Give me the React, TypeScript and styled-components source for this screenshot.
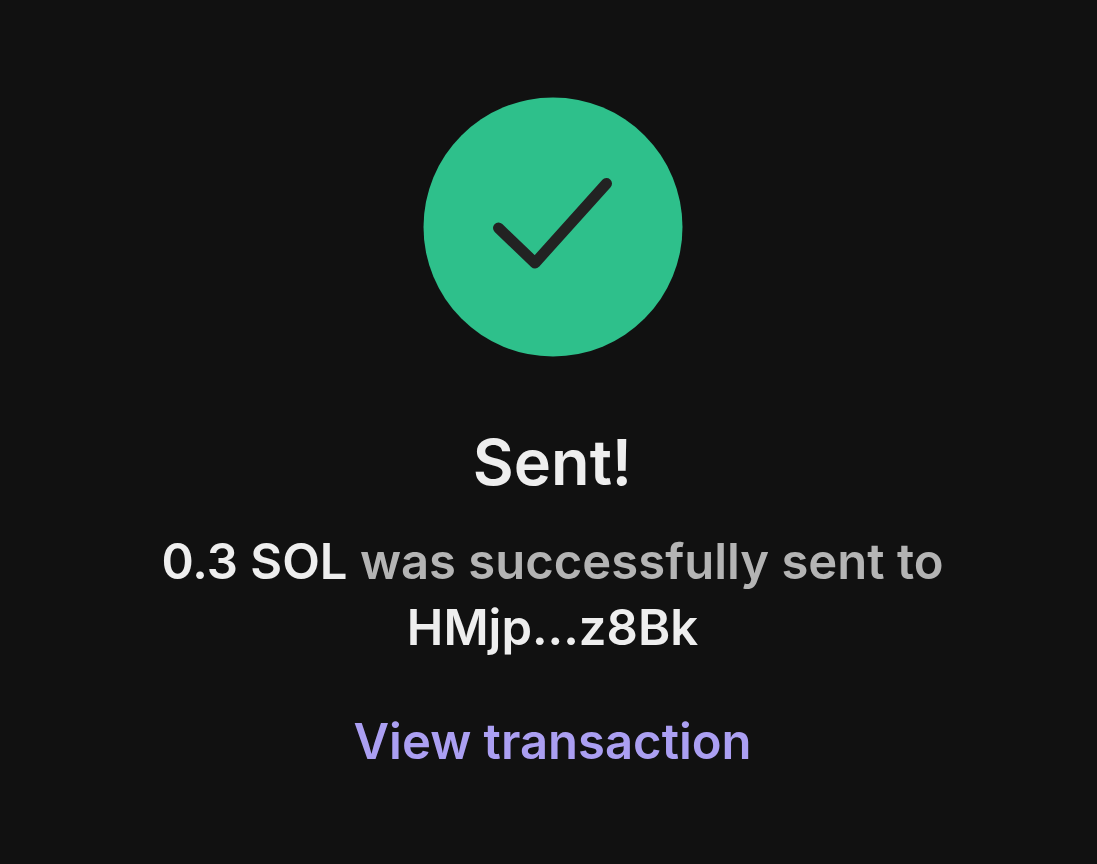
import React from "react";
import styled, { createGlobalStyle } from "styled-components";

const GlobalStyle = createGlobalStyle`
  body {
    margin: 0;
    background: #111111;
    font-family: Inter, "Liberation Sans", sans-serif;
    -webkit-font-smoothing: antialiased;
  }
`;

const Screen = styled.main`
  display: flex;
  flex-direction: column;
  align-items: center;
  box-sizing: border-box;
  min-height: 100vh;
  padding: 97px 56px 64px 64px;
  text-align: center;
`;

const StatusIcon = styled.svg`
  display: block;
  width: 260px;
  height: 260px;
`;

const Title = styled.h1`
  margin: 64px 0 0;
  color: #eeeeee;
  font-size: 63px;
  font-weight: 600;
  line-height: 82px;
`;

const Message = styled.p`
  margin: 26px 0 0;
  color: #b4b4b4;
  font-size: 49px;
  font-weight: 600;
  line-height: 66px;
`;

const Strong = styled.span`
  color: #eeeeee;
`;

const TransactionLink = styled.a`
  margin-top: 48px;
  color: #ab9ff2;
  font-size: 49px;
  font-weight: 600;
  line-height: 66px;
  text-decoration: none;
`;

export default function App() {
  return (
    <>
      <GlobalStyle />
      <Screen>
        <StatusIcon viewBox="0 0 260 260" aria-hidden="true">
          <circle cx="130" cy="130" r="129.5" fill="#2ec08b" />
          <path
            d="M75.5 131L112 166L183.5 86.5"
            fill="none"
            stroke="#222222"
            strokeWidth="11"
            strokeLinecap="round"
            strokeLinejoin="round"
          />
        </StatusIcon>
        <Title>Sent!</Title>
        <Message>
          <Strong>0.3 SOL</Strong> was successfully sent to
          <br />
          <Strong>HMjp...z8Bk</Strong>
        </Message>
        <TransactionLink href="#transaction">View transaction</TransactionLink>
      </Screen>
    </>
  );
}
